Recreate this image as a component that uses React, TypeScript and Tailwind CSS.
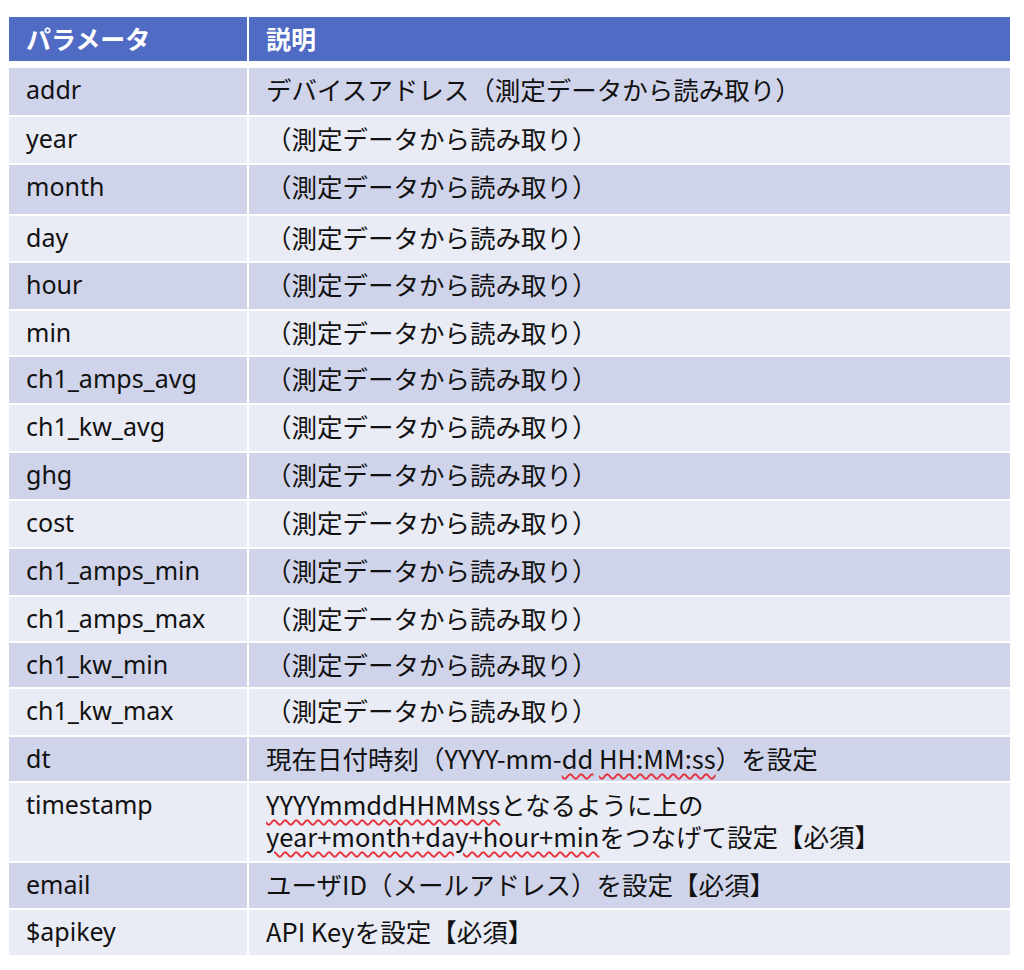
import React from 'react';

type Row = {
  name: string;
  desc: React.ReactNode;
  h: string;
};

const READ = '（測定データから読み取り）';

// spell-check style squiggle seen in the slide
const Wavy: React.FC<{ children: React.ReactNode }> = ({ children }) => (
  <span className="underline decoration-wavy decoration-[#e8303a] decoration-[length:1.5px] underline-offset-[4px]">
    {children}
  </span>
);

const rows: Row[] = [
  { name: 'addr', desc: 'デバイスアドレス' + READ, h: 'h-[47px]' },
  { name: 'year', desc: READ, h: 'h-[46px]' },
  { name: 'month', desc: READ, h: 'h-[49px]' },
  { name: 'day', desc: READ, h: 'h-[45px]' },
  { name: 'hour', desc: READ, h: 'h-[46px]' },
  { name: 'min', desc: READ, h: 'h-[44px]' },
  { name: 'ch1_amps_avg', desc: READ, h: 'h-[46px]' },
  { name: 'ch1_kw_avg', desc: READ, h: 'h-[46px]' },
  { name: 'ghg', desc: READ, h: 'h-[46px]' },
  { name: 'cost', desc: READ, h: 'h-[46px]' },
  { name: 'ch1_amps_min', desc: READ, h: 'h-[46px]' },
  { name: 'ch1_amps_max', desc: READ, h: 'h-[44px]' },
  { name: 'ch1_kw_min', desc: READ, h: 'h-[44px]' },
  { name: 'ch1_kw_max', desc: READ, h: 'h-[46px]' },
  {
    name: 'dt',
    desc: (
      <>
        現在日付時刻（YYYY-mm-<Wavy>dd</Wavy> <Wavy>HH:MM:ss</Wavy>）を設定
      </>
    ),
    h: 'h-[44px]',
  },
  {
    name: 'timestamp',
    desc: (
      <>
        <Wavy>YYYYmmddHHMMss</Wavy>となるように上の
        <br />
        <Wavy>year+month+day+hour+min</Wavy>をつなげて設定【必須】
      </>
    ),
    h: 'h-[78px]',
  },
  { name: 'email', desc: 'ユーザID（メールアドレス）を設定【必須】', h: 'h-[45px]' },
  { name: '$apikey', desc: 'API Keyを設定【必須】', h: 'h-[45px]' },
];

const App: React.FC = () => {
  return (
    <div className="min-h-screen bg-white pt-[17px] pl-[9px] font-['Noto_Sans_CJK_JP',sans-serif] text-[25px] text-[#111]">
      <div className="w-[1001px] flex flex-col gap-[2px]">
        {/* Header */}
        <div className="flex gap-[2px] h-[44px] mb-[5px] text-white font-bold">
          <div className="w-[238px] bg-[#4f6bc4] flex items-center pl-[17px]">パラメータ</div>
          <div className="flex-1 bg-[#4f6bc4] flex items-center pl-[17px]">説明</div>
        </div>

        {rows.map((r, i) => {
          const bg = i % 2 === 0 ? 'bg-[#d0d4ea]' : 'bg-[#e9ebf5]';
          return (
            <div key={r.name} className={`flex gap-[2px] ${r.h}`}>
              <div
                className={`w-[238px] ${bg} pl-[17px] pt-[5px] leading-[32px] font-['Noto_Sans','Noto_Sans_CJK_JP',sans-serif]`}
              >
                {r.name}
              </div>
              <div className={`flex-1 ${bg} pl-[17px] pt-[5px] leading-[32px] text-[25.5px] whitespace-nowrap`}>
                {r.desc}
              </div>
            </div>
          );
        })}
      </div>
    </div>
  );
};

export default App;
